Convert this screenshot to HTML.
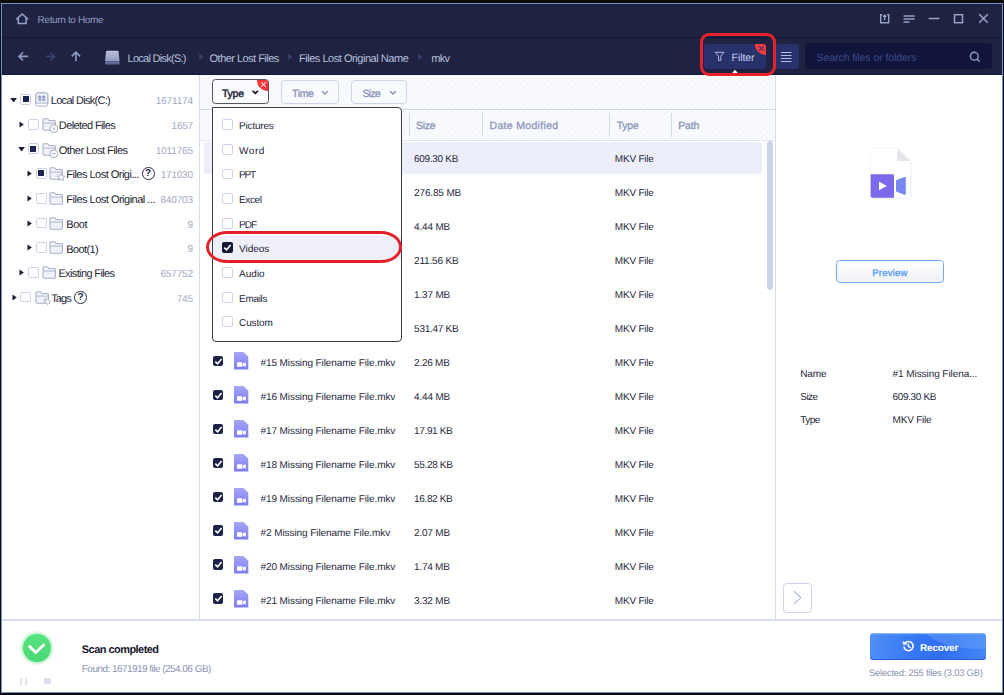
<!DOCTYPE html>
<html><head><meta charset="utf-8"><title>Data Recovery</title>
<style>
html,body{margin:0;padding:0;}
body{width:1004px;height:695px;overflow:hidden;background:#0d0c0b;position:relative;font-family:"Liberation Sans",sans-serif;}
div,span,svg{position:absolute;box-sizing:border-box;}
.t{white-space:nowrap;line-height:1;text-rendering:geometricPrecision;}
.cb{width:10.8px;height:10.8px;border:1.1px solid #cfd5e9;border-radius:2px;background:#fff;}
.cbm{width:10.8px;height:10.8px;border:1.1px solid #c9cfe6;border-radius:2px;background:#fff;}
.cbm:after{content:"";position:absolute;left:1.3px;top:1.3px;width:6px;height:6px;background:#1d2350;}
.ck{width:10.6px;height:10.7px;border-radius:2px;background:#1d2249;}
.hl{height:1px;background:#d6dcec;}
.vl{width:1px;background:#d6dcec;}
</style></head><body>
<div style="left:1px;top:3px;width:1002px;height:690px;background:#7094c8"></div>
<div style="left:2px;top:4px;width:1000px;height:71px;background:#1f2240;box-shadow:inset 1px 1px 0 #1a1c3b"></div>
<div style="left:2px;top:37px;width:1000px;height:1px;background:#141536"></div>
<div style="left:2px;top:74px;width:1000px;height:1px;background:#15173a"></div>
<div style="left:2px;top:75px;width:1000px;height:617px;background:#fff"></div>
<svg style="left:14px;top:11px" width="17" height="15" viewBox="0 0 17 15"><path d="M2.3 8.4 L8.2 3 L14.1 8.4 M4.3 7.4 V12.6 H12.1 V7.4" fill="none" stroke="#97a3c9" stroke-width="1.5" stroke-linejoin="miter"/></svg>

<svg style="left:879px;top:12px" width="12" height="13" viewBox="0 0 12 13"><path d="M3.2 2.7 H1.7 V10.7 H9.7 V2.7 H8.2" fill="none" stroke="#97a3c9" stroke-width="1.4"/><path d="M5.7 8.2 V3.2 M4.1 4.8 L5.7 3.2 L7.3 4.8" fill="none" stroke="#97a3c9" stroke-width="1.3"/></svg>

<svg style="left:903px;top:14px" width="13" height="10" viewBox="0 0 13 10"><path d="M0.6 2 H11.6 M0.6 5 H11.6 M0.6 8 H6.6" stroke="#97a3c9" stroke-width="1.5"/></svg>

<svg style="left:928px;top:16px" width="12" height="5" viewBox="0 0 12 5"><path d="M0.7 2.5 H11.3" stroke="#97a3c9" stroke-width="1.5"/></svg>

<svg style="left:953px;top:13px" width="11" height="11" viewBox="0 0 11 11"><rect x="1.5" y="1.7" width="8" height="8" fill="none" stroke="#97a3c9" stroke-width="1.5"/></svg>

<svg style="left:978px;top:13px" width="11" height="11" viewBox="0 0 11 11"><path d="M1.2 1.2 L9.8 9.8 M9.8 1.2 L1.2 9.8" stroke="#97a3c9" stroke-width="1.5"/></svg>

<svg style="left:17px;top:50px" width="13" height="13" viewBox="0 0 13 13"><path d="M11.2 6.4 H2.2 M6.1 2.3 L2 6.4 L6.1 10.5" fill="none" stroke="#8d9ac2" stroke-width="1.6"/></svg>

<svg style="left:44px;top:50px" width="13" height="13" viewBox="0 0 13 13"><path d="M1.7 6.4 H10.2 M6.3 2.3 L10.4 6.4 L6.3 10.5" fill="none" stroke="#35416e" stroke-width="1.6"/></svg>

<svg style="left:69px;top:50px" width="13" height="13" viewBox="0 0 13 13"><path d="M6.9 11.3 V2.4 M2.7 6.4 L6.9 2.2 L11.1 6.4" fill="none" stroke="#8d9ac2" stroke-width="1.6"/></svg>

<svg style="left:104px;top:50px" width="17" height="15" viewBox="0 0 17 15"><defs><linearGradient id="dg" x1="0" y1="0" x2="0" y2="1"><stop offset="0" stop-color="#bcc3dc"/><stop offset="1" stop-color="#8f99bd"/></linearGradient></defs><path d="M3 0.8 H13.6 Q14.4 0.8 14.5 1.6 L15.6 11.3 H1 L2.1 1.6 Q2.2 0.8 3 0.8Z" fill="url(#dg)"/><path d="M1 11.3 H15.6 V13.4 Q15.6 14.4 14.6 14.4 H2 Q1 14.4 1 13.4Z" fill="#5f6a94"/></svg>

<svg style="left:199px;top:52.5px" width="5" height="8" viewBox="0 0 5 8"><path d="M0.3 0.5 L4.2 3.7 L0.3 7Z" fill="#38436f"/></svg>

<svg style="left:288.4px;top:52.5px" width="5" height="8" viewBox="0 0 5 8"><path d="M0.3 0.5 L4.2 3.7 L0.3 7Z" fill="#38436f"/></svg>

<svg style="left:418px;top:52.5px" width="5" height="8" viewBox="0 0 5 8"><path d="M0.3 0.5 L4.2 3.7 L0.3 7Z" fill="#38436f"/></svg>

<div style="left:704px;top:44px;width:62px;height:25px;background:#27326c;border-radius:3px;overflow:hidden"><div style="left:51px;top:-11px;width:22px;height:22px;border-radius:11px;background:#fb3a3b"></div></div>
<svg style="left:758px;top:45.1px" width="7" height="7" viewBox="0 0 7 7"><path d="M1.1 1.1 L5.7 5.7 M5.7 1.1 L1.1 5.7" stroke="#3a2f6c" stroke-width="1.1"/></svg>

<svg style="left:714px;top:51px" width="12" height="11" viewBox="0 0 12 11"><path d="M1.3 1.3 H10 L6.8 5.2 V9.4 H4.5 V5.2Z" fill="none" stroke="#aeb8e0" stroke-width="1" stroke-linejoin="round"/></svg>

<svg style="left:730px;top:69px" width="10" height="6" viewBox="0 0 10 6"><path d="M0.4 6 L5 0.8 L9.6 6Z" fill="#fff"/></svg>

<div style="left:776px;top:44px;width:22.5px;height:25px;background:#27326c;border-radius:3px"></div>
<svg style="left:780px;top:51px" width="13" height="11" viewBox="0 0 13 11"><path d="M1 1.5 H11.5 M1 4.5 H11.5 M1 7.5 H11.5 M1 10.5 H11.5" stroke="#b4bde0" stroke-width="1"/></svg>

<div style="left:805px;top:43px;width:187px;height:26px;background:#11153b;border-radius:4px"></div>
<svg style="left:968px;top:50px" width="14" height="14" viewBox="0 0 14 14"><circle cx="6.3" cy="6.2" r="3.9" fill="none" stroke="#8d9ac2" stroke-width="1.4"/><path d="M9.2 9.2 L11.8 11.8" stroke="#8d9ac2" stroke-width="1.5"/></svg>

<div class="vl" style="left:199px;top:75px;height:545px"></div>
<svg style="left:10px;top:96.65px" width="8" height="7" viewBox="0 0 8 7"><path d="M0.3 1.1 H6.9 L3.6 5.5Z" fill="#1a1a30"/></svg>

<div class="cbm" style="left:20.3px;top:94.05px"></div>
<svg style="left:34.8px;top:92.15px" width="14" height="16" viewBox="0 0 14 16"><rect x="0.8" y="0.9" width="12" height="13.3" rx="2" fill="#fff" stroke="#a9b1cb" stroke-width="1"/><path d="M2.8 0.9 H10.8 Q12.8 0.9 12.8 2.9 V11.1 H0.8 V2.9 Q0.8 0.9 2.8 0.9Z" fill="#eef0f8" stroke="#a9b1cb" stroke-width="1"/><rect x="3.3" y="3.7" width="2.9" height="2.2" fill="#8f9ac0"/><rect x="7.2" y="3.7" width="2.9" height="2.2" fill="#8f9ac0"/><rect x="3.3" y="6.5" width="2.9" height="2.2" fill="#8f9ac0"/><rect x="7.2" y="6.5" width="2.9" height="2.2" fill="#8f9ac0"/></svg>

<svg style="left:19px;top:119.85px" width="6" height="9" viewBox="0 0 6 9"><path d="M0.5 1.6 L4.8 4.5 L0.5 7.4Z" fill="#1a1a30"/></svg>

<div class="cb" style="left:28.2px;top:118.75px"></div>
<svg style="left:41.5px;top:116.85px" width="17" height="16" viewBox="0 0 17 16"><path d="M1 2.8 Q1 1.7 2.1 1.7 H5.6 L7 3.5 H12.3 Q13.4 3.5 13.4 4.6 V12.1 Q13.4 13.2 12.3 13.2 H2.1 Q1 13.2 1 12.1Z" fill="#f0f2f9" stroke="#a9b1cb" stroke-width="1.1"/><path d="M1.4 6.1 H13.1" stroke="#a9b1cb" stroke-width="0.9"/><circle cx="11.9" cy="11.7" r="3.9" fill="#fff" stroke="#a3abc6" stroke-width="1"/><path d="M10.7 10.5 L13.1 12.9 M13.1 10.5 L10.7 12.9" stroke="#a3abc6" stroke-width="0.9"/></svg>

<svg style="left:18px;top:146.05px" width="8" height="7" viewBox="0 0 8 7"><path d="M0.3 1.1 H6.9 L3.6 5.5Z" fill="#1a1a30"/></svg>

<div class="cbm" style="left:28.2px;top:143.45px"></div>
<svg style="left:41.5px;top:141.55px" width="17" height="16" viewBox="0 0 17 16"><path d="M1 2.8 Q1 1.7 2.1 1.7 H5.6 L7 3.5 H12.3 Q13.4 3.5 13.4 4.6 V12.1 Q13.4 13.2 12.3 13.2 H2.1 Q1 13.2 1 12.1Z" fill="#f0f2f9" stroke="#a9b1cb" stroke-width="1.1"/><path d="M1.4 6.1 H13.1" stroke="#a9b1cb" stroke-width="0.9"/><circle cx="11.9" cy="11.7" r="3.9" fill="#fff" stroke="#a3abc6" stroke-width="1"/><path d="M10.1 11.7 H13.7" stroke="#a3abc6" stroke-width="1"/></svg>

<svg style="left:19px;top:268.05px" width="6" height="9" viewBox="0 0 6 9"><path d="M0.5 1.6 L4.8 4.5 L0.5 7.4Z" fill="#1a1a30"/></svg>

<div class="cb" style="left:28.2px;top:266.95px"></div>
<svg style="left:41.5px;top:265.05px" width="17" height="16" viewBox="0 0 17 16"><path d="M1 2.8 Q1 1.7 2.1 1.7 H5.6 L7 3.5 H12.3 Q13.4 3.5 13.4 4.6 V12.1 Q13.4 13.2 12.3 13.2 H2.1 Q1 13.2 1 12.1Z" fill="#f0f2f9" stroke="#a9b1cb" stroke-width="1.1"/><path d="M1.4 6.1 H13.1" stroke="#a9b1cb" stroke-width="0.9"/></svg>

<svg style="left:27px;top:169.25px" width="6" height="9" viewBox="0 0 6 9"><path d="M0.5 1.6 L4.8 4.5 L0.5 7.4Z" fill="#1a1a30"/></svg>

<div class="cbm" style="left:36px;top:168.15px"></div>
<svg style="left:49.3px;top:166.25px" width="17" height="16" viewBox="0 0 17 16"><path d="M1 2.8 Q1 1.7 2.1 1.7 H5.6 L7 3.5 H12.3 Q13.4 3.5 13.4 4.6 V12.1 Q13.4 13.2 12.3 13.2 H2.1 Q1 13.2 1 12.1Z" fill="#f0f2f9" stroke="#a9b1cb" stroke-width="1.1"/><path d="M1.4 6.1 H13.1" stroke="#a9b1cb" stroke-width="0.9"/><path d="M12.2 7.6 L13.3 9.9 L15.8 10.2 L14 11.9 L14.5 14.4 L12.2 13.2 L9.9 14.4 L10.4 11.9 L8.6 10.2 L11.1 9.9Z" fill="#fff" stroke="#9aa2bd" stroke-width="0.8"/></svg>

<svg style="left:27px;top:193.95px" width="6" height="9" viewBox="0 0 6 9"><path d="M0.5 1.6 L4.8 4.5 L0.5 7.4Z" fill="#1a1a30"/></svg>

<div class="cb" style="left:36px;top:192.85px"></div>
<svg style="left:49.3px;top:190.95px" width="17" height="16" viewBox="0 0 17 16"><path d="M1 2.8 Q1 1.7 2.1 1.7 H5.6 L7 3.5 H12.3 Q13.4 3.5 13.4 4.6 V12.1 Q13.4 13.2 12.3 13.2 H2.1 Q1 13.2 1 12.1Z" fill="#f0f2f9" stroke="#a9b1cb" stroke-width="1.1"/><path d="M1.4 6.1 H13.1" stroke="#a9b1cb" stroke-width="0.9"/></svg>

<svg style="left:27px;top:218.65px" width="6" height="9" viewBox="0 0 6 9"><path d="M0.5 1.6 L4.8 4.5 L0.5 7.4Z" fill="#1a1a30"/></svg>

<div class="cb" style="left:36px;top:217.55px"></div>
<svg style="left:49.3px;top:215.65px" width="17" height="16" viewBox="0 0 17 16"><path d="M1 2.8 Q1 1.7 2.1 1.7 H5.6 L7 3.5 H12.3 Q13.4 3.5 13.4 4.6 V12.1 Q13.4 13.2 12.3 13.2 H2.1 Q1 13.2 1 12.1Z" fill="#f0f2f9" stroke="#a9b1cb" stroke-width="1.1"/><path d="M1.4 6.1 H13.1" stroke="#a9b1cb" stroke-width="0.9"/></svg>

<svg style="left:27px;top:243.35px" width="6" height="9" viewBox="0 0 6 9"><path d="M0.5 1.6 L4.8 4.5 L0.5 7.4Z" fill="#1a1a30"/></svg>

<div class="cb" style="left:36px;top:242.25px"></div>
<svg style="left:49.3px;top:240.35px" width="17" height="16" viewBox="0 0 17 16"><path d="M1 2.8 Q1 1.7 2.1 1.7 H5.6 L7 3.5 H12.3 Q13.4 3.5 13.4 4.6 V12.1 Q13.4 13.2 12.3 13.2 H2.1 Q1 13.2 1 12.1Z" fill="#f0f2f9" stroke="#a9b1cb" stroke-width="1.1"/><path d="M1.4 6.1 H13.1" stroke="#a9b1cb" stroke-width="0.9"/></svg>

<svg style="left:11.7px;top:292.75px" width="6" height="9" viewBox="0 0 6 9"><path d="M0.5 1.6 L4.8 4.5 L0.5 7.4Z" fill="#1a1a30"/></svg>

<div class="cb" style="left:20.2px;top:291.65px"></div>
<svg style="left:34.5px;top:289.75px" width="17" height="16" viewBox="0 0 17 16"><path d="M1 2.8 Q1 1.7 2.1 1.7 H5.6 L7 3.5 H12.3 Q13.4 3.5 13.4 4.6 V12.1 Q13.4 13.2 12.3 13.2 H2.1 Q1 13.2 1 12.1Z" fill="#f0f2f9" stroke="#a9b1cb" stroke-width="1.1"/><path d="M1.4 6.1 H13.1" stroke="#a9b1cb" stroke-width="0.9"/><path d="M9.2 9.4 L12 8.6 L15.4 12 L13 14.6 L9.6 11.6Z" fill="#fff" stroke="#9aa2bd" stroke-width="0.9"/><circle cx="11" cy="10.6" r="0.7" fill="#9aa2bd"/></svg>

<div style="left:142px;top:167.45px;width:12.6px;height:12.6px;border:1.1px solid #2a2c44;border-radius:50%"></div><span class="t" style="left:145.1px;top:169.35px;font-size:10px;color:#2a2c44;font-weight:700;">?</span>
<div style="left:74.3px;top:290.95px;width:12.6px;height:12.6px;border:1.1px solid #2a2c44;border-radius:50%"></div><span class="t" style="left:77.4px;top:292.85px;font-size:10px;color:#2a2c44;font-weight:700;">?</span>
<div style="left:200px;top:75px;width:575px;height:65px;background-color:#f9fafe;background-image:radial-gradient(circle,#f4f5fb 0.6px,transparent 1px),radial-gradient(circle,#f4f5fb 0.6px,transparent 1px);background-size:6px 6px;background-position:0 0,3px 3px;"></div>
<div class="hl" style="left:200px;top:109px;width:575px;background:#d3d9ea"></div>
<div class="hl" style="left:200px;top:140px;width:575px;background:#e1e5f1"></div>
<div class="vl" style="left:775px;top:75px;height:545px"></div>
<div class="vl" style="left:408.7px;top:113px;height:24px;background:#d3d9ea"></div>
<div class="vl" style="left:482px;top:113px;height:24px;background:#d3d9ea"></div>
<div class="vl" style="left:609.2px;top:113px;height:24px;background:#d3d9ea"></div>
<div class="vl" style="left:671px;top:113px;height:24px;background:#d3d9ea"></div>
<div style="left:212.1px;top:79.2px;width:56.9px;height:24.9px;border:1.1px solid #55555c;border-radius:3.5px;background:#fbfcff;overflow:hidden"><div style="left:44px;top:-10.8px;width:21.6px;height:21.6px;border-radius:50%;background:#f93238"></div></div>
<svg style="left:260.2px;top:81.4px" width="7" height="7" viewBox="0 0 7 7"><path d="M1.2 1.2 L5.8 5.8 M5.8 1.2 L1.2 5.8" stroke="#ffd9da" stroke-width="1.1"/></svg>

<svg style="left:250.5px;top:89px" width="9" height="7" viewBox="0 0 9 7"><path d="M1.6 1.8 L4.3 4.4 L7 1.8" fill="none" stroke="#16162e" stroke-width="1.7"/></svg>

<div style="left:281.3px;top:79.5px;width:57.6px;height:24.3px;border:1.2px solid #cdd4e8;border-radius:4px;background:#f9fafe"></div>
<svg style="left:320.8px;top:89.6px" width="8" height="6" viewBox="0 0 8 6"><path d="M1.1 1.2 L3.9 4 L6.7 1.2" fill="none" stroke="#8a93b8" stroke-width="1.5"/></svg>

<div style="left:351.2px;top:79.5px;width:55.7px;height:24.3px;border:1.2px solid #cdd4e8;border-radius:4px;background:#f9fafe"></div>
<svg style="left:388.6px;top:89.6px" width="8" height="6" viewBox="0 0 8 6"><path d="M1.1 1.2 L3.9 4 L6.7 1.2" fill="none" stroke="#8a93b8" stroke-width="1.5"/></svg>

<div style="left:204.2px;top:141.6px;width:558.3px;height:32.8px;background:#eceef9;border-radius:3px"></div>
<div style="left:767px;top:141px;width:6px;height:149px;background:#ccd3e6;border-radius:3px"></div>
<div class="ck" style="left:212.8px;top:355.7px"></div>
<svg style="left:212.8px;top:355.7px" width="11" height="11" viewBox="0 0 11 11"><path d="M2.3 5.6 L4.6 7.8 L8.6 3" fill="none" stroke="#fff" stroke-width="1.6"/></svg>

<svg style="left:234px;top:352.4px" width="15" height="18" viewBox="0 0 15 18"><defs><linearGradient id="fg" x1="0" y1="0" x2="0" y2="1"><stop offset="0" stop-color="#a6a6f6"/><stop offset="1" stop-color="#7d7cf1"/></linearGradient></defs><path d="M0.6 0 H9.6 L14.3 4.7 V17 Q14.3 17.6 13.7 17.6 H0.6 Q0 17.6 0 17 V0.6 Q0 0 0.6 0Z" fill="url(#fg)"/><rect x="3" y="10.2" width="5.4" height="4.6" rx="0.5" fill="#fff"/><path d="M8.9 11.5 Q8.9 11.1 9.3 10.9 L11.3 10.4 Q11.8 10.3 11.8 10.8 V14.2 Q11.8 14.7 11.3 14.6 L9.3 14.1 Q8.9 13.9 8.9 13.5Z" fill="#fff"/></svg>

<div class="ck" style="left:212.8px;top:389.65px"></div>
<svg style="left:212.8px;top:389.65px" width="11" height="11" viewBox="0 0 11 11"><path d="M2.3 5.6 L4.6 7.8 L8.6 3" fill="none" stroke="#fff" stroke-width="1.6"/></svg>

<svg style="left:234px;top:386.35px" width="15" height="18" viewBox="0 0 15 18"><path d="M0.6 0 H9.6 L14.3 4.7 V17 Q14.3 17.6 13.7 17.6 H0.6 Q0 17.6 0 17 V0.6 Q0 0 0.6 0Z" fill="url(#fg)"/><rect x="3" y="10.2" width="5.4" height="4.6" rx="0.5" fill="#fff"/><path d="M8.9 11.5 Q8.9 11.1 9.3 10.9 L11.3 10.4 Q11.8 10.3 11.8 10.8 V14.2 Q11.8 14.7 11.3 14.6 L9.3 14.1 Q8.9 13.9 8.9 13.5Z" fill="#fff"/></svg>

<div class="ck" style="left:212.8px;top:423.6px"></div>
<svg style="left:212.8px;top:423.6px" width="11" height="11" viewBox="0 0 11 11"><path d="M2.3 5.6 L4.6 7.8 L8.6 3" fill="none" stroke="#fff" stroke-width="1.6"/></svg>

<svg style="left:234px;top:420.3px" width="15" height="18" viewBox="0 0 15 18"><path d="M0.6 0 H9.6 L14.3 4.7 V17 Q14.3 17.6 13.7 17.6 H0.6 Q0 17.6 0 17 V0.6 Q0 0 0.6 0Z" fill="url(#fg)"/><rect x="3" y="10.2" width="5.4" height="4.6" rx="0.5" fill="#fff"/><path d="M8.9 11.5 Q8.9 11.1 9.3 10.9 L11.3 10.4 Q11.8 10.3 11.8 10.8 V14.2 Q11.8 14.7 11.3 14.6 L9.3 14.1 Q8.9 13.9 8.9 13.5Z" fill="#fff"/></svg>

<div class="ck" style="left:212.8px;top:457.55px"></div>
<svg style="left:212.8px;top:457.55px" width="11" height="11" viewBox="0 0 11 11"><path d="M2.3 5.6 L4.6 7.8 L8.6 3" fill="none" stroke="#fff" stroke-width="1.6"/></svg>

<svg style="left:234px;top:454.25px" width="15" height="18" viewBox="0 0 15 18"><path d="M0.6 0 H9.6 L14.3 4.7 V17 Q14.3 17.6 13.7 17.6 H0.6 Q0 17.6 0 17 V0.6 Q0 0 0.6 0Z" fill="url(#fg)"/><rect x="3" y="10.2" width="5.4" height="4.6" rx="0.5" fill="#fff"/><path d="M8.9 11.5 Q8.9 11.1 9.3 10.9 L11.3 10.4 Q11.8 10.3 11.8 10.8 V14.2 Q11.8 14.7 11.3 14.6 L9.3 14.1 Q8.9 13.9 8.9 13.5Z" fill="#fff"/></svg>

<div class="ck" style="left:212.8px;top:491.5px"></div>
<svg style="left:212.8px;top:491.5px" width="11" height="11" viewBox="0 0 11 11"><path d="M2.3 5.6 L4.6 7.8 L8.6 3" fill="none" stroke="#fff" stroke-width="1.6"/></svg>

<svg style="left:234px;top:488.2px" width="15" height="18" viewBox="0 0 15 18"><path d="M0.6 0 H9.6 L14.3 4.7 V17 Q14.3 17.6 13.7 17.6 H0.6 Q0 17.6 0 17 V0.6 Q0 0 0.6 0Z" fill="url(#fg)"/><rect x="3" y="10.2" width="5.4" height="4.6" rx="0.5" fill="#fff"/><path d="M8.9 11.5 Q8.9 11.1 9.3 10.9 L11.3 10.4 Q11.8 10.3 11.8 10.8 V14.2 Q11.8 14.7 11.3 14.6 L9.3 14.1 Q8.9 13.9 8.9 13.5Z" fill="#fff"/></svg>

<div class="ck" style="left:212.8px;top:525.45px"></div>
<svg style="left:212.8px;top:525.45px" width="11" height="11" viewBox="0 0 11 11"><path d="M2.3 5.6 L4.6 7.8 L8.6 3" fill="none" stroke="#fff" stroke-width="1.6"/></svg>

<svg style="left:234px;top:522.15px" width="15" height="18" viewBox="0 0 15 18"><path d="M0.6 0 H9.6 L14.3 4.7 V17 Q14.3 17.6 13.7 17.6 H0.6 Q0 17.6 0 17 V0.6 Q0 0 0.6 0Z" fill="url(#fg)"/><rect x="3" y="10.2" width="5.4" height="4.6" rx="0.5" fill="#fff"/><path d="M8.9 11.5 Q8.9 11.1 9.3 10.9 L11.3 10.4 Q11.8 10.3 11.8 10.8 V14.2 Q11.8 14.7 11.3 14.6 L9.3 14.1 Q8.9 13.9 8.9 13.5Z" fill="#fff"/></svg>

<div class="ck" style="left:212.8px;top:559.4px"></div>
<svg style="left:212.8px;top:559.4px" width="11" height="11" viewBox="0 0 11 11"><path d="M2.3 5.6 L4.6 7.8 L8.6 3" fill="none" stroke="#fff" stroke-width="1.6"/></svg>

<svg style="left:234px;top:556.1px" width="15" height="18" viewBox="0 0 15 18"><path d="M0.6 0 H9.6 L14.3 4.7 V17 Q14.3 17.6 13.7 17.6 H0.6 Q0 17.6 0 17 V0.6 Q0 0 0.6 0Z" fill="url(#fg)"/><rect x="3" y="10.2" width="5.4" height="4.6" rx="0.5" fill="#fff"/><path d="M8.9 11.5 Q8.9 11.1 9.3 10.9 L11.3 10.4 Q11.8 10.3 11.8 10.8 V14.2 Q11.8 14.7 11.3 14.6 L9.3 14.1 Q8.9 13.9 8.9 13.5Z" fill="#fff"/></svg>

<div class="ck" style="left:212.8px;top:593.35px"></div>
<svg style="left:212.8px;top:593.35px" width="11" height="11" viewBox="0 0 11 11"><path d="M2.3 5.6 L4.6 7.8 L8.6 3" fill="none" stroke="#fff" stroke-width="1.6"/></svg>

<svg style="left:234px;top:590.05px" width="15" height="18" viewBox="0 0 15 18"><path d="M0.6 0 H9.6 L14.3 4.7 V17 Q14.3 17.6 13.7 17.6 H0.6 Q0 17.6 0 17 V0.6 Q0 0 0.6 0Z" fill="url(#fg)"/><rect x="3" y="10.2" width="5.4" height="4.6" rx="0.5" fill="#fff"/><path d="M8.9 11.5 Q8.9 11.1 9.3 10.9 L11.3 10.4 Q11.8 10.3 11.8 10.8 V14.2 Q11.8 14.7 11.3 14.6 L9.3 14.1 Q8.9 13.9 8.9 13.5Z" fill="#fff"/></svg>

<div style="left:212px;top:107px;width:190px;height:234.5px;border:1px solid #3c3c40;border-radius:0 4px 4px 4px;background:#fff"></div>
<div style="left:213px;top:235.5px;width:188px;height:24.5px;background:#eeeff7"></div>
<div class="cb" style="left:222.3px;top:119.2px"></div>
<div class="cb" style="left:222.3px;top:143.85px"></div>
<div class="cb" style="left:222.3px;top:168.5px"></div>
<div class="cb" style="left:222.3px;top:193.15px"></div>
<div class="cb" style="left:222.3px;top:217.8px"></div>
<div class="ck" style="left:222.3px;top:242.45px;background:#151838"></div>
<svg style="left:222.3px;top:242.45px" width="11" height="11" viewBox="0 0 11 11"><path d="M2.3 5.6 L4.6 7.8 L8.6 3" fill="none" stroke="#fff" stroke-width="1.6"/></svg>

<div class="cb" style="left:222.3px;top:267.1px"></div>
<div class="cb" style="left:222.3px;top:291.75px"></div>
<div class="cb" style="left:222.3px;top:316.4px"></div>
<svg style="left:864px;top:143px" width="52" height="62" viewBox="0 0 52 62"><defs><filter id="sh" x="-20%" y="-20%" width="140%" height="140%"><feGaussianBlur stdDeviation="1.6"/></filter></defs><path d="M8 6.5 H33.5 L46 18.5 V54.5 H8Z" fill="#c4c6dc" opacity="0.7" filter="url(#sh)"/><path d="M8 6 H33.2 L46 18 V53.6 Q46 55 44.6 55 H8 Q6.6 55 6.6 53.6 V7.4 Q6.6 6 8 6Z" fill="#fff"/><path d="M33.2 6 L46 18 H35 Q33.2 18 33.2 16.2Z" fill="#e3e4ec"/><path d="M6.6 31.2 H28.6 Q30 31.2 30 32.6 V54.8 H8.6 Q6.6 54.8 6.6 52.8Z" fill="#7c6aec"/><path d="M15 38.6 L22.8 42.9 L15 47.2Z" fill="#fff"/><path d="M32 38 Q32 37.4 32.6 37.1 L40.4 34 Q41.8 33.5 41.8 35 V50.8 Q41.8 52.3 40.4 51.8 L32.6 48.7 Q32 48.4 32 47.8Z" fill="#7887f1"/></svg>

<div style="left:836px;top:260px;width:108px;height:23px;border:1px solid #6fabf8;border-radius:3.5px;background:linear-gradient(#ffffff,#eff1f7)"></div>
<div style="left:783px;top:583px;width:29.2px;height:29.8px;border:1.1px solid #cdd4e8;border-radius:3.5px;background:#fff"></div>
<svg style="left:792px;top:589px" width="12" height="17" viewBox="0 0 12 17"><path d="M2 2.2 L8.8 8.6 L2 15" fill="none" stroke="#b9c2dc" stroke-width="1.3"/></svg>

<div class="hl" style="left:2px;top:619px;width:1000px;height:1.6px;background:#d8deee"></div>
<div style="left:19.7px;top:630.9px;width:34.2px;height:34.2px;border-radius:50%;background:radial-gradient(circle,#b9f1c6 0,#bdf2c9 13.6px,#d9f8e0 15.6px,#f1fcf3 17.1px)"></div>
<div style="left:22.9px;top:634.1px;width:27.8px;height:27.8px;border-radius:50%;background:linear-gradient(#56e381,#4cd974)"></div>
<svg style="left:27px;top:641px" width="20" height="16" viewBox="0 0 20 16"><path d="M2.7 5.6 L8.7 11.5 L16.6 4" fill="none" stroke="#fff" stroke-width="3" stroke-linecap="round" stroke-linejoin="round"/></svg>

<div style="left:20.1px;top:677.7px;width:1.9px;height:6.9px;background:#dfe3f0"></div><div style="left:24.9px;top:677.7px;width:2px;height:6.9px;background:#dfe3f0"></div>
<div style="left:44.3px;top:677.9px;width:6.6px;height:6.6px;background:#dde1ee"></div>
<div style="left:870px;top:632.5px;width:115.7px;height:27.7px;border-radius:3.5px;overflow:hidden;background:linear-gradient(100deg,#4f90f7 0%,#3676f2 40%,#2f6ef1 62%,#4388f6 100%);box-shadow:inset 0 1.2px 0 #82b4fb,inset 0 -1px 0 #2a62dd"><div style="left:52px;top:-34px;width:110px;height:50px;border-radius:50%;background:rgba(120,175,255,0.35)"></div></div>
<svg style="left:902px;top:640px" width="13" height="13" viewBox="0 0 13 13"><path d="M2.6 3.6 A4.6 4.6 0 1 1 1.9 6.6" fill="none" stroke="#fff" stroke-width="1.6"/><path d="M0.9 1.6 L1.6 4.8 L4.8 4.1Z" fill="#fff" stroke="#fff" stroke-width="0.6" stroke-linejoin="round"/><path d="M6.3 3.4 V6.3 L8.7 7.8" fill="none" stroke="#fff" stroke-width="1.3"/></svg>

<!-- text -->
<span class="t" style="top:16px;font-size:10px;color:#8f9bc2;left:37.60px;letter-spacing:-0.357px;">Return to Home</span>
<span class="t" style="top:54px;font-size:11px;color:#b7c0dd;left:127.50px;letter-spacing:-0.726px;">Local Disk(S:)</span>
<span class="t" style="top:54px;font-size:11px;color:#b7c0dd;left:209.60px;letter-spacing:-0.534px;">Other Lost Files</span>
<span class="t" style="top:54px;font-size:11px;color:#b7c0dd;left:298.90px;letter-spacing:-0.456px;">Files Lost Original Name</span>
<span class="t" style="top:54px;font-size:11px;color:#b7c0dd;left:431.20px;letter-spacing:-0.624px;">mkv</span>
<span class="t" style="top:53px;font-size:10.5px;color:#c7cff0;left:731.60px;letter-spacing:-0.074px;">Filter</span>
<span class="t" style="top:53px;font-size:10.5px;color:#3c4b8d;left:816.60px;letter-spacing:-0.076px;">Search files or folders</span>
<span class="t" style="top:96px;font-size:11px;color:#1e1f33;left:50.80px;letter-spacing:-0.706px;">Local Disk(C:)</span>
<span class="t" style="top:97px;font-size:10px;color:#9fa9c4;right:811.17px;letter-spacing:-0.172px;">1671174</span>
<span class="t" style="top:121px;font-size:11px;color:#1e1f33;left:58.80px;letter-spacing:-0.608px;">Deleted Files</span>
<span class="t" style="top:122px;font-size:10px;color:#9fa9c4;right:811.29px;letter-spacing:-0.287px;">1657</span>
<span class="t" style="top:146px;font-size:11px;color:#1e1f33;left:58.80px;letter-spacing:-0.559px;">Other Lost Files</span>
<span class="t" style="top:147px;font-size:10px;color:#9fa9c4;right:811.17px;letter-spacing:-0.172px;">1011765</span>
<span class="t" style="top:170px;font-size:11px;color:#1e1f33;left:66.30px;letter-spacing:-0.517px;">Files Lost Origi...</span>
<span class="t" style="top:171px;font-size:10px;color:#9fa9c4;right:811.23px;letter-spacing:-0.229px;">171030</span>
<span class="t" style="top:195px;font-size:11px;color:#1e1f33;left:66.30px;letter-spacing:-0.503px;">Files Lost Original ...</span>
<span class="t" style="top:196px;font-size:10px;color:#9fa9c4;right:811.16px;letter-spacing:-0.163px;">840703</span>
<span class="t" style="top:220px;font-size:11px;color:#1e1f33;left:66.30px;letter-spacing:-0.485px;">Boot</span>
<span class="t" style="top:221px;font-size:10px;color:#9fa9c4;right:811.16px;letter-spacing:-0.162px;">9</span>
<span class="t" style="top:245px;font-size:11px;color:#1e1f33;left:66.30px;letter-spacing:-0.597px;">Boot(1)</span>
<span class="t" style="top:245px;font-size:10px;color:#9fa9c4;right:811.16px;letter-spacing:-0.162px;">9</span>
<span class="t" style="top:269px;font-size:11px;color:#1e1f33;left:58.40px;letter-spacing:-0.621px;">Existing Files</span>
<span class="t" style="top:270px;font-size:10px;color:#9fa9c4;right:811.16px;letter-spacing:-0.163px;">657752</span>
<span class="t" style="top:294px;font-size:11px;color:#1e1f33;left:51.20px;letter-spacing:-0.888px;">Tags</span>
<span class="t" style="top:295px;font-size:10px;color:#9fa9c4;right:811.20px;letter-spacing:-0.196px;">745</span>
<span class="t" style="top:89px;font-size:10.5px;color:#17172f;left:222.00px;letter-spacing:-0.241px;-webkit-text-stroke:0.4px #17172f;">Type</span>
<span class="t" style="top:89px;font-size:10.5px;color:#8790b6;left:292.10px;letter-spacing:-0.363px;-webkit-text-stroke:0.25px #8790b6;">Time</span>
<span class="t" style="top:89px;font-size:10.5px;color:#8790b6;left:362.60px;letter-spacing:-0.734px;-webkit-text-stroke:0.25px #8790b6;">Size</span>
<span class="t" style="top:121px;font-size:10.5px;color:#8791b7;left:415.90px;letter-spacing:-0.234px;-webkit-text-stroke:0.25px #8791b7;">Size</span>
<span class="t" style="top:121px;font-size:10.5px;color:#8791b7;left:489.50px;letter-spacing:0.323px;-webkit-text-stroke:0.25px #8791b7;">Date Modified</span>
<span class="t" style="top:121px;font-size:10.5px;color:#8791b7;left:616.80px;letter-spacing:-0.266px;-webkit-text-stroke:0.25px #8791b7;">Type</span>
<span class="t" style="top:121px;font-size:10.5px;color:#8791b7;left:678.20px;letter-spacing:-0.177px;-webkit-text-stroke:0.25px #8791b7;">Path</span>
<span class="t" style="top:155px;font-size:10px;color:#25263a;left:414.10px;letter-spacing:-0.302px;">609.30 KB</span>
<span class="t" style="top:155px;font-size:10px;color:#25263a;left:614.80px;letter-spacing:-0.208px;">MKV File</span>
<span class="t" style="top:189px;font-size:10px;color:#25263a;left:414.10px;letter-spacing:-0.153px;">276.85 MB</span>
<span class="t" style="top:189px;font-size:10px;color:#25263a;left:614.80px;letter-spacing:-0.208px;">MKV File</span>
<span class="t" style="top:223px;font-size:10px;color:#25263a;left:414.10px;letter-spacing:-0.179px;">4.44 MB</span>
<span class="t" style="top:223px;font-size:10px;color:#25263a;left:614.80px;letter-spacing:-0.208px;">MKV File</span>
<span class="t" style="top:257px;font-size:10px;color:#25263a;left:414.10px;letter-spacing:-0.185px;">211.56 KB</span>
<span class="t" style="top:257px;font-size:10px;color:#25263a;left:614.80px;letter-spacing:-0.208px;">MKV File</span>
<span class="t" style="top:291px;font-size:10px;color:#25263a;left:414.10px;letter-spacing:-0.179px;">1.37 MB</span>
<span class="t" style="top:291px;font-size:10px;color:#25263a;left:614.80px;letter-spacing:-0.208px;">MKV File</span>
<span class="t" style="top:325px;font-size:10px;color:#25263a;left:414.10px;letter-spacing:-0.269px;">531.47 KB</span>
<span class="t" style="top:325px;font-size:10px;color:#25263a;left:614.80px;letter-spacing:-0.208px;">MKV File</span>
<span class="t" style="top:359px;font-size:10px;color:#25263a;left:414.10px;letter-spacing:-0.250px;">2.26 MB</span>
<span class="t" style="top:359px;font-size:10px;color:#25263a;left:614.80px;letter-spacing:-0.208px;">MKV File</span>
<span class="t" style="top:359px;font-size:10px;color:#25263a;left:260.50px;letter-spacing:-0.088px;">#15 Missing Filename File.mkv</span>
<span class="t" style="top:393px;font-size:10px;color:#25263a;left:414.10px;letter-spacing:-0.179px;">4.44 MB</span>
<span class="t" style="top:393px;font-size:10px;color:#25263a;left:614.80px;letter-spacing:-0.208px;">MKV File</span>
<span class="t" style="top:393px;font-size:10px;color:#25263a;left:260.50px;letter-spacing:-0.088px;">#16 Missing Filename File.mkv</span>
<span class="t" style="top:427px;font-size:10px;color:#25263a;left:414.10px;letter-spacing:-0.370px;">17.91 KB</span>
<span class="t" style="top:427px;font-size:10px;color:#25263a;left:614.80px;letter-spacing:-0.208px;">MKV File</span>
<span class="t" style="top:427px;font-size:10px;color:#25263a;left:260.50px;letter-spacing:-0.088px;">#17 Missing Filename File.mkv</span>
<span class="t" style="top:461px;font-size:10px;color:#25263a;left:414.10px;letter-spacing:-0.345px;">55.28 KB</span>
<span class="t" style="top:461px;font-size:10px;color:#25263a;left:614.80px;letter-spacing:-0.208px;">MKV File</span>
<span class="t" style="top:461px;font-size:10px;color:#25263a;left:260.50px;letter-spacing:-0.088px;">#18 Missing Filename File.mkv</span>
<span class="t" style="top:495px;font-size:10px;color:#25263a;left:414.10px;letter-spacing:-0.370px;">16.82 KB</span>
<span class="t" style="top:495px;font-size:10px;color:#25263a;left:614.80px;letter-spacing:-0.208px;">MKV File</span>
<span class="t" style="top:495px;font-size:10px;color:#25263a;left:260.50px;letter-spacing:-0.088px;">#19 Missing Filename File.mkv</span>
<span class="t" style="top:529px;font-size:10px;color:#25263a;left:414.10px;letter-spacing:-0.207px;">2.07 MB</span>
<span class="t" style="top:529px;font-size:10px;color:#25263a;left:614.80px;letter-spacing:-0.208px;">MKV File</span>
<span class="t" style="top:529px;font-size:10px;color:#25263a;left:260.50px;letter-spacing:-0.072px;">#2 Missing Filename File.mkv</span>
<span class="t" style="top:563px;font-size:10px;color:#25263a;left:414.10px;letter-spacing:-0.250px;">1.74 MB</span>
<span class="t" style="top:563px;font-size:10px;color:#25263a;left:614.80px;letter-spacing:-0.208px;">MKV File</span>
<span class="t" style="top:563px;font-size:10px;color:#25263a;left:260.50px;letter-spacing:-0.088px;">#20 Missing Filename File.mkv</span>
<span class="t" style="top:597px;font-size:10px;color:#25263a;left:414.10px;letter-spacing:-0.207px;">3.32 MB</span>
<span class="t" style="top:597px;font-size:10px;color:#25263a;left:614.80px;letter-spacing:-0.208px;">MKV File</span>
<span class="t" style="top:597px;font-size:10px;color:#25263a;left:260.50px;letter-spacing:-0.088px;">#21 Missing Filename File.mkv</span>
<span class="t" style="top:122px;font-size:10px;color:#24253b;left:239.10px;letter-spacing:-0.203px;">Pictures</span>
<span class="t" style="top:147px;font-size:10px;color:#24253b;left:239.10px;letter-spacing:0.495px;">Word</span>
<span class="t" style="top:171px;font-size:10px;color:#24253b;left:239.10px;letter-spacing:-1.218px;">PPT</span>
<span class="t" style="top:196px;font-size:10px;color:#24253b;left:239.10px;letter-spacing:-0.391px;">Excel</span>
<span class="t" style="top:221px;font-size:10px;color:#24253b;left:239.10px;letter-spacing:-1.000px;">PDF</span>
<span class="t" style="top:245px;font-size:10px;color:#24253b;left:239.10px;letter-spacing:-0.034px;">Videos</span>
<span class="t" style="top:270px;font-size:10px;color:#24253b;left:239.10px;">Audio</span>
<span class="t" style="top:295px;font-size:10px;color:#24253b;left:239.10px;letter-spacing:-0.319px;">Emails</span>
<span class="t" style="top:319px;font-size:10px;color:#24253b;left:239.10px;letter-spacing:-0.159px;">Custom</span>
<span class="t" style="top:269px;font-size:9.5px;color:#559af6;left:872.30px;letter-spacing:0.215px;-webkit-text-stroke:0.3px #559af6;">Preview</span>
<span class="t" style="top:370px;font-size:10px;color:#25263a;left:800.30px;letter-spacing:-0.147px;">Name</span>
<span class="t" style="top:393px;font-size:10px;color:#25263a;left:800.30px;letter-spacing:-0.538px;">Size</span>
<span class="t" style="top:416px;font-size:10px;color:#25263a;left:800.30px;letter-spacing:-0.522px;">Type</span>
<span class="t" style="top:370px;font-size:10px;color:#25263a;left:892.60px;letter-spacing:-0.073px;">#1 Missing Filena...</span>
<span class="t" style="top:393px;font-size:10px;color:#25263a;left:892.60px;letter-spacing:-0.369px;">609.30 KB</span>
<span class="t" style="top:416px;font-size:10px;color:#25263a;left:892.60px;letter-spacing:-0.220px;">MKV File</span>
<span class="t" style="top:645px;font-size:11px;color:#17182c;left:81.80px;font-weight:700;letter-spacing:-0.547px;">Scan completed</span>
<span class="t" style="top:665px;font-size:10px;color:#8a94b4;left:81.80px;letter-spacing:-0.537px;">Found: 1671919 file (254.06 GB)</span>
<span class="t" style="top:644px;font-size:10px;color:#ffffff;left:920.10px;font-weight:700;letter-spacing:-0.210px;">Recover</span>
<span class="t" style="top:669px;font-size:9.5px;color:#8c95b3;left:869.00px;letter-spacing:-0.271px;">Selected: 255 files (3.03 GB)</span>
<div style="left:699.5px;top:33.3px;width:76.4px;height:43.1px;border:3.1px solid #e8212b;border-radius:9px"></div>
<div style="left:206.3px;top:231.4px;width:195.6px;height:32.1px;border:3px solid #e3202a;border-radius:21px / 16px"></div></body></html>
